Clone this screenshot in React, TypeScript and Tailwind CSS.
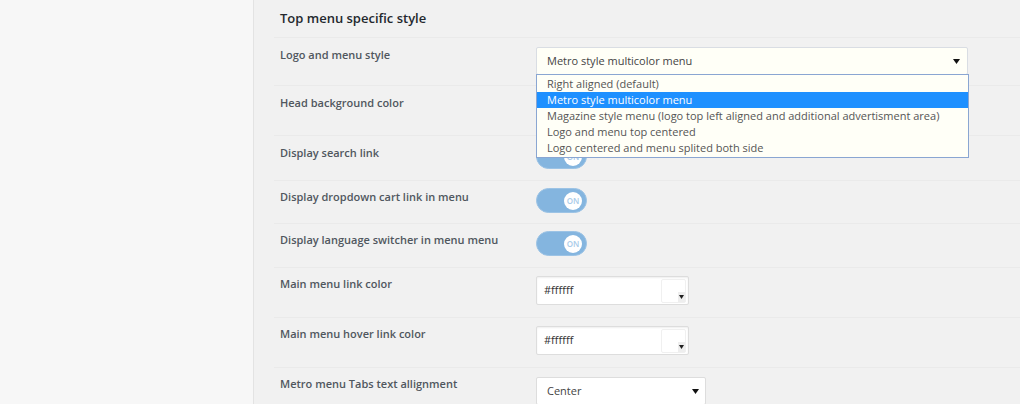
import React from "react";

const options = [
  "Right aligned (default)",
  "Metro style multicolor menu",
  "Magazine style menu (logo top left aligned and additional advertisment area)",
  "Logo and menu top centered",
  "Logo centered and menu splited both side",
];

function Caret() {
  return (
    <svg width="7" height="5" viewBox="0 0 7 5" className="shrink-0">
      <path d="M0 0h7L3.5 5z" fill="#111" />
    </svg>
  );
}

function Toggle() {
  return (
    <div className="w-[51px] h-[25px] rounded-full bg-[#84b5df] border border-[#9cc3e5] flex items-center justify-end pr-[4px]">
      <div className="w-[18px] h-[18px] rounded-full bg-white flex items-center justify-center text-[8px] font-semibold text-[#a9cbe9] leading-none">
        ON
      </div>
    </div>
  );
}

function ColorInput({ value }: { value: string }) {
  return (
    <div className="w-[153px] h-[29px] bg-white border border-[#dddddd] rounded-[2px] shadow-[inset_0_1px_2px_rgba(0,0,0,0.07)] flex items-center pl-[7px] pr-[2px]">
      <span className="flex-1 text-[11px] text-[#333]">{value}</span>
      <div className="w-[25px] h-[24px] bg-white border border-[#f0f0f0] rounded-[2px] flex items-end justify-end">
        <div className="w-[7px] h-[10px] bg-[#eeeeee] flex items-center justify-center">
          <svg width="5" height="4" viewBox="0 0 5 4"><path d="M0 0h5L2.5 4z" fill="#222" /></svg>
        </div>
      </div>
    </div>
  );
}

function Row({ label, h, pt, mt, children }: { label: string; h: string; pt: string; mt: string; children?: React.ReactNode }) {
  return (
    <div className={`flex border-t border-[#eaeaea] ${h}`}>
      <div className={`w-[262px] pl-[6px] text-[11px] leading-[18px] font-semibold text-[#50575e] ${pt}`}>{label}</div>
      <div className={mt}>{children}</div>
    </div>
  );
}

export default function App() {
  return (
    <div className="w-[1020px] h-[404px] overflow-hidden flex" style={{ fontFamily: '"Open Sans", sans-serif' }}>
      <div className="w-[254px] shrink-0 bg-[#f7f7f7] border-r border-[#e3e3e3]" />
      <div className="flex-1 bg-[#f1f1f1] relative">
        <div className="h-[37px] pl-[26px] pt-[8px] text-[13px] leading-[20px] font-semibold text-[#23282d]">
          Top menu specific style
        </div>
        <div className="ml-[20px]">
          <Row label="Logo and menu style" h="h-[48px]" pt="pt-[8px]" mt="mt-[9px]">
            <div className="w-[432px] h-[28px] bg-[#fffff7] border border-[#d9dde3] rounded-[2px] flex items-center pl-[10px] pr-[7px] text-[11px] text-[#444]">
              <span className="flex-1">Metro style multicolor menu</span>
              <Caret />
            </div>
          </Row>
          <Row label="Head background color" h="h-[50px]" pt="pt-[8px]" mt="mt-[9px]" />
          <Row label="Display search link" h="h-[45px]" pt="pt-[8px]" mt="mt-[8px]">
            <Toggle />
          </Row>
          <Row label="Display dropdown cart link in menu" h="h-[43px]" pt="pt-[7px]" mt="mt-[7px]">
            <Toggle />
          </Row>
          <Row label="Display language switcher in menu menu" h="h-[44px]" pt="pt-[7px]" mt="mt-[7px]">
            <Toggle />
          </Row>
          <Row label="Main menu link color" h="h-[50px]" pt="pt-[7px]" mt="mt-[8px]">
            <ColorInput value="#ffffff" />
          </Row>
          <Row label="Main menu hover link color" h="h-[50px]" pt="pt-[7px]" mt="mt-[8px]">
            <ColorInput value="#ffffff" />
          </Row>
          <Row label="Metro menu Tabs text allignment" h="h-[50px]" pt="pt-[7px]" mt="mt-[9px]">
            <div className="w-[170px] h-[28px] bg-white border border-[#dddddd] rounded-[2px] flex items-center pl-[10px] pr-[6px] text-[11px] text-[#444]">
              <span className="flex-1">Center</span>
              <Caret />
            </div>
          </Row>
        </div>

        {/* open dropdown list */}
        <div className="absolute left-[282px] top-[74px] w-[433px] bg-[#fffff7] border border-[#8aa6d2] py-[1px] text-[11px] text-[#555]">
          {options.map((o, i) => (
            <div
              key={o}
              className={`h-[16px] leading-[16px] pl-[10px] ${i === 1 ? "bg-[#1e90ff] text-white" : ""}`}
            >
              {o}
            </div>
          ))}
        </div>
      </div>
    </div>
  );
}
